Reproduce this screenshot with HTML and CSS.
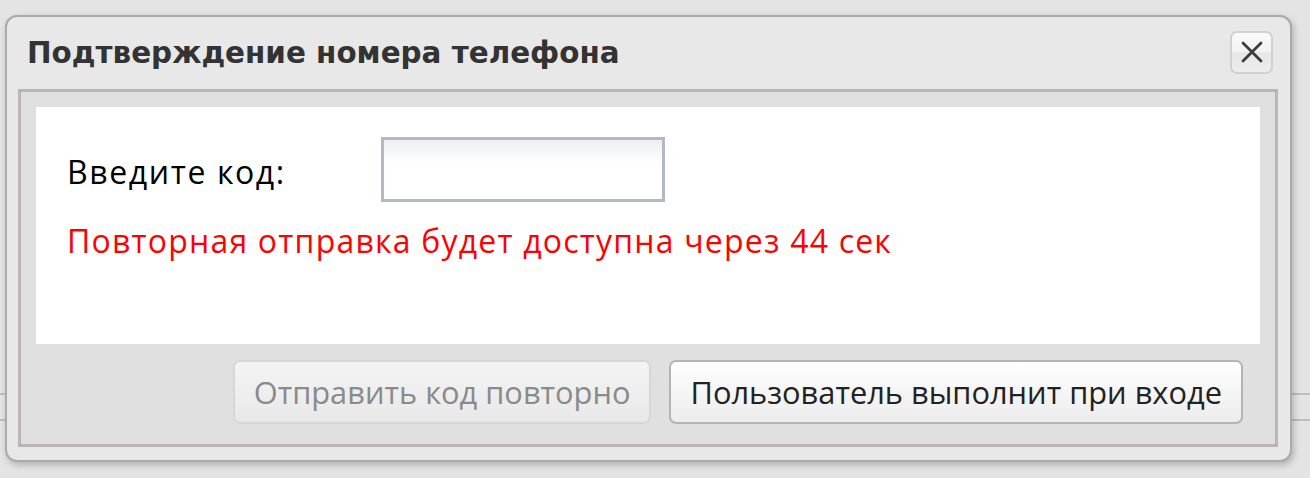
FILE: index.html
```html
<!DOCTYPE html>
<html lang="ru">
<head>
<meta charset="utf-8">
<link rel="stylesheet" href="styles.css">
</head>
<body>
<div class="page">
  <div class="dialog">
    <div class="titlebar">
      <h1 class="title">Подтверждение номера телефона</h1>
      <button class="close" aria-label="Закрыть">
        <svg width="26" height="26" viewBox="0 0 26 26"><path d="M4 4 L22 22 M22 4 L4 22" stroke="#3c3c3c" stroke-width="2.8" stroke-linecap="round" fill="none"/></svg>
      </button>
    </div>
    <div class="panel">
      <div class="content">
        <div class="row">
          <span class="label">Введите код:</span>
          <input class="code" type="text">
        </div>
        <div class="warn">Повторная отправка будет доступна через 44 сек</div>
      </div>
      <div class="actions">
        <button class="btn disabled">Отправить код повторно</button>
        <button class="btn">Пользователь выполнит при входе</button>
      </div>
    </div>
  </div>
</div>
</body>
</html>
```
FILE: styles.css
```css
html, body {
  margin: 0;
  padding: 0;
}
body {
  background-color: #e4e4e4;
  background-image:
    linear-gradient(#bdbdbd, #bdbdbd),
    linear-gradient(#bdbdbd, #bdbdbd);
  background-repeat: no-repeat;
  background-size: 100% 2px, 100% 2px;
  background-position: 0 393px, 0 419px;
  width: 1310px;
  height: 478px;
  overflow: hidden;
  font-family: "Open Sans", "Noto Sans", sans-serif;
}
.page {
  padding: 15px 0 0 5px;
}
.dialog {
  width: 1287px;
  height: 447px;
  box-sizing: border-box;
  background: #e8e8e8;
  border: 2px solid #aaaaaa;
  border-radius: 12px;
  box-shadow: 2px 3px 7px rgba(0,0,0,0.22);
  padding: 0 12px 0 11px;
  display: flex;
  flex-direction: column;
}
.titlebar {
  height: 72px;
  display: flex;
  align-items: center;
  justify-content: space-between;
}
.title {
  margin: 0 0 0 9px;
  font-family: "DejaVu Sans", Verdana, sans-serif;
  font-weight: bold;
  font-size: 29.4px;
  color: #333333;
  letter-spacing: 0;
}
.close {
  width: 43px;
  height: 43px;
  margin: -2px 5px 0 0;
  padding: 0;
  border: 2px solid #d0d0d0;
  border-radius: 7px;
  background: linear-gradient(#fafafa 0%, #f2f2f2 48%, #e6e6e6 52%, #ededed 100%);
  display: flex;
  align-items: center;
  justify-content: center;
}
.close svg {
  filter: blur(0.5px);
}
.panel {
  height: 358px;
  box-sizing: border-box;
  border: 3px solid #bdb3b3;
  background: #e0e0e0;
  padding: 15px 15px 0 15px;
  display: flex;
  flex-direction: column;
}
.content {
  height: 237px;
  background: #ffffff;
  padding: 30px 0 0 31px;
  box-sizing: border-box;
}
.row {
  display: flex;
  align-items: center;
}
.label {
  width: 314px;
  font-size: 32px;
  letter-spacing: 1.6px;
  color: #000;
  margin-top: 4px;
}
.code {
  width: 284px;
  height: 65px;
  box-sizing: border-box;
  border: 3px solid #b3b7c8;
  background: linear-gradient(#eceff0, #ffffff 38%);
  margin: 0;
  outline: none;
}
.warn {
  margin-top: 17px;
  font-size: 32px;
  letter-spacing: 1.2px;
  color: #ff0000;
}
.actions {
  display: flex;
  justify-content: flex-end;
  gap: 18px;
  padding: 16px 17px 0 0;
}
.btn {
  height: 64px;
  box-sizing: border-box;
  border: 2px solid #b4b4b4;
  border-radius: 7px;
  background: linear-gradient(#ffffff, #ececec);
  font-family: "Open Sans", "Noto Sans", sans-serif;
  font-size: 30.8px;
  color: #222;
  padding: 0 19px;
}
.btn.disabled {
  border-color: #d6d6d6;
  background: linear-gradient(#f4f4f4, #e8e8e8);
  color: #8a8a8a;
}
```
